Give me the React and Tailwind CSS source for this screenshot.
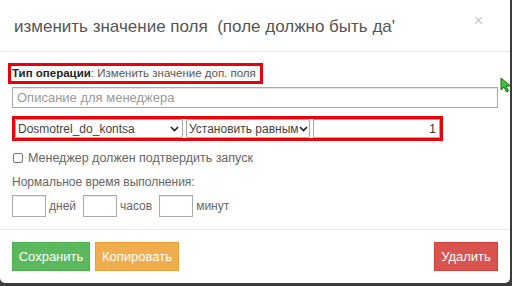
import React from 'react'

const font = { fontFamily: '"Liberation Sans", Arial, sans-serif' }

const Chevron = () => (
  <svg width="9" height="6" viewBox="0 0 9 6" className="shrink-0">
    <path d="M1 1l3.5 3.5L8 1" fill="none" stroke="#222" strokeWidth="1.6" />
  </svg>
)

const Select = ({ value, className = '' }) => (
  <div className={`h-[19px] flex items-center justify-between border border-[#a9a9a9] rounded-[2px] bg-white pl-[2px] pr-[3px] text-[12px] text-[#444] ${className}`}>
    <span className="whitespace-nowrap">{value}</span>
    <Chevron />
  </div>
)

const TimeBox = ({ label, className = '' }) => (
  <div className={`flex items-center ${className}`}>
    <div className="w-[34px] h-[22px] border border-[#aaa] bg-white shadow-[inset_0_1px_1px_rgba(0,0,0,0.08)]" />
    <span className="ml-[3px] text-[12px] text-[#666]">{label}</span>
  </div>
)

export default function App() {
  return (
    <div className="w-[512px] h-[286px] bg-[#3b3b3b] overflow-hidden relative" style={font}>
      <div className="w-[510px] h-[283px] bg-white rounded-b-[5px] flex flex-col">
        {/* header */}
        <div className="h-[52px] shrink-0 border-b border-[#e8e8e8] flex items-center pl-[14px] pr-[30px] relative">
          <div className="text-[17px] text-[#555] whitespace-nowrap overflow-hidden pt-[2px]">
            изменить значение поля&nbsp; (поле должно быть да'
          </div>
          <span className="absolute right-[27px] top-[9px] text-[16px] text-[#c8c8c8]">×</span>
        </div>

        {/* body */}
        <div className="flex-1 px-[12px] pt-[11px]">
          <div className="-ml-[4px] w-[255px] h-[21px] border-[3px] border-[#e8000b] flex items-center pl-[1px] text-[11.5px] text-[#555] whitespace-nowrap">
            <b className="text-[#222]">Тип операции</b>: Изменить значение доп. поля
          </div>
          <div className="mt-[3px] w-[486px] h-[21px] border border-[#aaa] shadow-[inset_0_1px_1px_rgba(0,0,0,0.1)] flex items-center pl-[4px] text-[13px] text-[#999]">
            Описание для менеджера
          </div>
          <div className="mt-[8px] w-[431px] h-[25px] border-[3px] border-[#e8000b] flex items-center gap-[3px]">
            <Select value="Dosmotrel_do_kontsa" className="w-[168px]" />
            <Select value="Установить равным" className="w-[124px]" />
            <div className="w-[127px] h-[19px] border border-[#aaa] flex items-center justify-end pr-[3px] text-[12px] text-[#333]">1</div>
          </div>
          <div className="mt-[8px] flex items-center gap-[5px] pl-[1px]">
            <div className="w-[10px] h-[10px] border border-[#777] rounded-[2px] bg-white" />
            <span className="text-[12.5px] text-[#666]">Менеджер должен подтвердить запуск</span>
          </div>
          <div className="mt-[5px] text-[12px] text-[#666]">Нормальное время выполнения:</div>
          <div className="mt-[4px] flex items-center">
            <TimeBox label="дней" />
            <TimeBox label="часов" className="ml-[7px]" />
            <TimeBox label="минут" className="ml-[7px]" />
          </div>
        </div>

        {/* footer */}
        <div className="h-[54px] shrink-0 border-t border-[#e8e8e8] flex items-center justify-between px-[12px]">
          <div className="flex gap-[5px]">
            <button className="w-[78px] h-[29px] bg-[#5cb85c] border border-[#4cae4c] text-white text-[13px]">Сохранить</button>
            <button className="w-[84px] h-[29px] bg-[#f0ad4e] border border-[#eea236] text-white text-[13px]">Копировать</button>
          </div>
          <button className="w-[64px] h-[29px] bg-[#d9534f] border border-[#d43f3a] text-white text-[13px]">Удалить</button>
        </div>
      </div>

      {/* cursor */}
      <svg className="absolute left-[500px] top-[77px]" width="12" height="16" viewBox="0 0 12 16">
        <path d="M1 1v12l3-3 2.5 5 2-1-2.5-5h4.5z" fill="#3fc23a" stroke="#1a6b17" strokeWidth="1" />
      </svg>
    </div>
  )
}
